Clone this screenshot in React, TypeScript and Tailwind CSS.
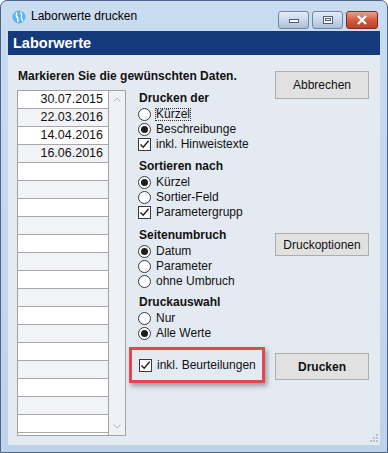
import React from "react"

const dates = ["30.07.2015", "22.03.2016", "14.04.2016", "16.06.2016"]
const rows = Array.from({ length: 19 }, (_, i) => dates[i] ?? "")

function Radio({ checked, label, focus }: { checked?: boolean; label: string; focus?: boolean }) {
  return (
    <div className="flex items-center h-[15px]">
      <span className="w-[13px] h-[13px] rounded-full border border-[#3a3a3a] bg-white flex items-center justify-center shrink-0">
        {checked && <span className="w-[7px] h-[7px] rounded-full bg-[#1e1e1e]" />}
      </span>
      <span
        className={`ml-[4px] text-[12px] leading-[13px] px-[1px] ${
          focus ? "outline outline-1 outline-dotted outline-[#333] -outline-offset-1" : ""
        }`}
      >
        {label}
      </span>
    </div>
  )
}

function Check({ label }: { label: string }) {
  return (
    <div className="flex items-center h-[15px]">
      <span className="w-[13px] h-[13px] border border-[#3a3a3a] bg-white flex items-center justify-center shrink-0">
        <svg width="11" height="11" viewBox="0 0 11 11">
          <path d="M1.5 5.5 L4.2 8.3 L9.6 1.8" fill="none" stroke="#222" strokeWidth="1.4" />
        </svg>
      </span>
      <span className="ml-[4px] text-[12px] leading-[13px] px-[1px]">{label}</span>
    </div>
  )
}

function GroupTitle({ children }: { children: React.ReactNode }) {
  return <div className="h-[16px] text-[12px] leading-[16px] font-bold pl-[1px]">{children}</div>
}

function WinButton({ kind }: { kind: "min" | "max" | "close" }) {
  if (kind === "close") {
    return (
      <div className="w-[32px] h-[18px] rounded-[3px] border border-[#7a2a20] bg-gradient-to-b from-[#e8a08e] via-[#d45a43] to-[#c0402a] flex items-center justify-center">
        <svg width="12" height="10" viewBox="0 0 12 10">
          <path d="M2 1 L10 9 M10 1 L2 9" stroke="#ffffff" strokeWidth="2.4" />
        </svg>
      </div>
    )
  }
  return (
    <div className="w-[31px] h-[18px] rounded-[3px] border border-[#6f86a3] bg-gradient-to-b from-[#e3ecf6] via-[#c9d8ea] to-[#aebfd6] flex items-center justify-center">
      {kind === "min" ? (
        <span className="w-[10px] h-[4px] bg-white border border-[#4c5f78] mt-[3px]" />
      ) : (
        <span className="w-[10px] h-[8px] bg-white border border-[#4c5f78] flex items-center justify-center">
          <span className="w-[6px] h-[3px] border border-[#4c5f78]" />
        </span>
      )}
    </div>
  )
}

export default function App() {
  return (
    <div
      className="w-[388px] h-[453px] flex flex-col bg-gradient-to-b from-[#c9dcf0] to-[#bed3ea] border border-[#4a6585] rounded-t-[7px] overflow-hidden text-[#111]"
      style={{ fontFamily: '"Liberation Sans", Arial, sans-serif' }}
    >
      {/* Title bar */}
      <div className="h-[30px] flex items-center shrink-0">
        <svg width="14" height="14" viewBox="0 0 14 14" className="ml-[11px] mt-[1px]">
          <circle cx="7" cy="7" r="6.5" fill="#5cb2ec" />
          <path d="M4 2.5 C6 3.5 3 5.5 5 7 C7 8.5 5 10.5 6 12" fill="none" stroke="#ffffff" strokeWidth="1.6" />
          <path d="M9 1.8 C8 3.5 10.5 4.5 9.5 6.5 C8.5 8.5 11 9.5 10.5 11.5" fill="none" stroke="#ffffff" strokeWidth="1.3" />
        </svg>
        <span className="ml-[5px] text-[12px] text-black">Laborwerte drucken</span>
        <div className="ml-auto mr-[9px] flex items-center gap-[3px] mt-[7px]">
          <WinButton kind="min" />
          <WinButton kind="max" />
          <WinButton kind="close" />
        </div>
      </div>

      {/* Client area */}
      <div className="flex-1 mx-[7px] mb-[7px] flex flex-col">
        <div className="h-[24px] shrink-0 bg-[#153a7b] text-white font-bold text-[14.5px] leading-[24px] pl-[5px]">
          Laborwerte
        </div>

        <div className="flex-1 relative flex bg-[#e4eaf2]">
          {/* Left block */}
          <div className="pl-[9px] pt-[14px] flex flex-col">
            <div className="text-[12px] leading-[14px] font-bold pl-[1px] whitespace-nowrap">
              Markieren Sie die gewünschten Daten.
            </div>
            <div className="mt-[7px] flex">
              {/* Date list */}
              <div className="w-[109px] h-[346px] border border-[#a3a3a3] bg-white flex overflow-hidden">
                <div className="w-[91px] border-r border-[#a3a3a3] flex flex-col">
                  {rows.map((d, i) => (
                    <div
                      key={i}
                      className={`h-[18px] shrink-0 border-b border-[#a8a8a8] text-[12.5px] leading-[17px] text-right pr-[5px] ${
                        i % 2 === 1 ? "bg-[#f1f3f7]" : "bg-white"
                      }`}
                    >
                      {d}
                    </div>
                  ))}
                </div>
                <div className="flex-1 bg-[#eef1f5] flex flex-col items-center justify-between pt-[6px] pb-[6px]">
                  <svg width="8" height="5" viewBox="0 0 8 5">
                    <path d="M0.5 4.5 L4 1 L7.5 4.5" fill="none" stroke="#b4b9c0" strokeWidth="1" />
                  </svg>
                  <svg width="8" height="5" viewBox="0 0 8 5">
                    <path d="M0.5 0.5 L4 4 L7.5 0.5" fill="none" stroke="#b4b9c0" strokeWidth="1" />
                  </svg>
                </div>
              </div>

              {/* Options */}
              <div className="ml-[12px] flex flex-col whitespace-nowrap">
                <GroupTitle>Drucken der</GroupTitle>
                <div className="mt-[1px] flex flex-col">
                  <Radio label="Kürzel" focus />
                  <Radio label="Beschreibunge" checked />
                  <Check label="inkl. Hinweistexte" />
                </div>

                <div className="mt-[6px]">
                  <GroupTitle>Sortieren nach</GroupTitle>
                </div>
                <div className="mt-[1px] flex flex-col">
                  <Radio label="Kürzel" checked />
                  <Radio label="Sortier-Feld" />
                  <Check label="Parametergrupp" />
                </div>

                <div className="mt-[7px]">
                  <GroupTitle>Seitenumbruch</GroupTitle>
                </div>
                <div className="mt-[1px] flex flex-col">
                  <Radio label="Datum" checked />
                  <Radio label="Parameter" />
                  <Radio label="ohne Umbruch" />
                </div>

                <div className="mt-[5px]">
                  <GroupTitle>Druckauswahl</GroupTitle>
                </div>
                <div className="mt-[1px] flex flex-col">
                  <Radio label="Nur" />
                  <Radio label="Alle Werte" checked />
                </div>

                <div className="mt-[6px] -ml-[9px] w-[136px] h-[36px] border-[3px] border-[#e2484b] shadow-[2px_3px_5px_rgba(0,0,0,0.35)] flex items-center pl-[7px]">
                  <Check label="inkl. Beurteilungen" />
                </div>
              </div>
            </div>
          </div>

          {/* Buttons */}
          <div className="ml-auto mr-[11px] pt-[16px] flex flex-col w-[94px]">
            <button className="h-[28px] bg-[#e1e1e1] border border-[#adadad] text-[12px]">Abbrechen</button>
            <button className="mt-[134px] h-[23px] bg-[#e1e1e1] border border-[#adadad] text-[12px]">
              Druckoptionen
            </button>
            <button className="mt-[97px] h-[27px] bg-[#e1e1e1] border border-[#adadad] text-[12px] font-bold">
              Drucken
            </button>
          </div>

          {/* Resize grip */}
          <svg width="10" height="10" viewBox="0 0 10 10" className="absolute right-[2px] bottom-[3px]">
            {[
              [8, 2],
              [5, 5],
              [8, 5],
              [2, 8],
              [5, 8],
              [8, 8],
            ].map(([x, y], i) => (
              <rect key={i} x={x} y={y} width="2" height="2" fill="#b5bec9" />
            ))}
          </svg>
        </div>
      </div>
    </div>
  )
}
